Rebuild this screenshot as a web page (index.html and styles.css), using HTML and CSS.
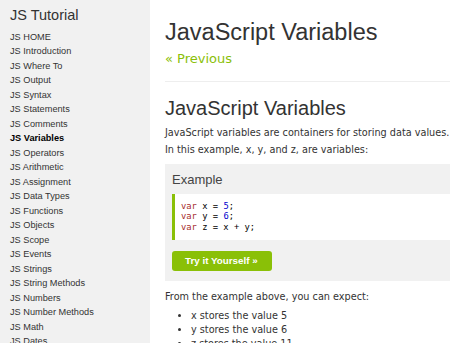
FILE: index.html
```html
<!DOCTYPE html>
<html>
<head>
<meta charset="utf-8">
<link rel="stylesheet" href="styles.css">
</head>
<body>
<aside class="sidebar">
  <h2 class="side-title">JS Tutorial</h2>
  <nav class="side-links">
    <a>JS HOME</a>
    <a>JS Introduction</a>
    <a>JS Where To</a>
    <a>JS Output</a>
    <a>JS Syntax</a>
    <a>JS Statements</a>
    <a>JS Comments</a>
    <a class="active">JS Variables</a>
    <a>JS Operators</a>
    <a>JS Arithmetic</a>
    <a>JS Assignment</a>
    <a>JS Data Types</a>
    <a>JS Functions</a>
    <a>JS Objects</a>
    <a>JS Scope</a>
    <a>JS Events</a>
    <a>JS Strings</a>
    <a>JS String Methods</a>
    <a>JS Numbers</a>
    <a>JS Number Methods</a>
    <a>JS Math</a>
    <a>JS Dates</a>
  </nav>
</aside>
<main class="content">
  <h1 class="page-title">JavaScript Variables</h1>
  <a class="prev">&laquo; Previous</a>
  <hr class="rule">
  <h2 class="section-title">JavaScript Variables</h2>
  <p class="text first">JavaScript variables are containers for storing data values.</p>
  <p class="text second">In this example, x, y, and z, are variables:</p>
  <div class="example">
    <h3 class="example-title">Example</h3>
    <div class="code"><span class="kw">var</span> x = <span class="num">5</span>;<br><span class="kw">var</span> y = <span class="num">6</span>;<br><span class="kw">var</span> z = x + y;</div>
    <a class="try">Try it Yourself &raquo;</a>
  </div>
  <p class="text after">From the example above, you can expect:</p>
  <ul class="list">
    <li>x stores the value 5</li>
    <li>y stores the value 6</li>
    <li>z stores the value 11</li>
  </ul>
</main>
</body>
</html>
```
FILE: styles.css
```css
html, body {
  margin: 0;
  padding: 0;
  overflow: hidden;
  background: #fff;
}
body {
  display: flex;
  align-items: flex-start;
  width: 450px;
  height: 343px;
}
.sidebar {
  flex: none;
  width: 150px;
  height: 343px;
  background: #f1f1f1;
  box-sizing: border-box;
  padding: 7px 0 0 10px;
  font-family: "Liberation Sans", Arial, sans-serif;
}
.side-title {
  margin: 0 0 6px 0;
  font-size: 14.5px;
  font-weight: normal;
  line-height: 17px;
  color: #333;
}
.side-links {
  display: flex;
  flex-direction: column;
}
.side-links a {
  font-size: 9.2px;
  line-height: 14.48px;
  color: #333;
}
.side-links a.active {
  font-weight: bold;
  color: #000;
}
.content {
  flex: none;
  width: 340px;
  padding-left: 15px;
  font-family: "DejaVu Sans", Verdana, sans-serif;
  color: #333;
}
.page-title {
  margin: 19px 0 0 0;
  font-family: "Liberation Sans", Arial, sans-serif;
  font-size: 23.5px;
  font-weight: normal;
  line-height: 26px;
  color: #333;
}
.prev {
  display: block;
  margin-top: 6px;
  font-size: 13px;
  line-height: 16px;
  color: #8ac007;
}
.rule {
  margin: 14px 0 0 0;
  border: 0;
  border-top: 1px solid #eee;
}
.section-title {
  margin: 15px 0 0 0;
  font-family: "Liberation Sans", Arial, sans-serif;
  font-size: 20px;
  font-weight: normal;
  line-height: 22px;
  color: #333;
}
.text {
  margin: 0;
  font-size: 9.7px;
  line-height: 13px;
}
.text.first { margin-top: 6.7px; }
.text.second { margin-top: 4.3px; }
.text.after { margin-top: 8.7px; }
.example {
  margin-top: 8px;
  background: #f1f1f1;
  padding: 8px 8px 10px 7px;
}
.example-title {
  margin: 0 0 6px 0;
  font-family: "Liberation Sans", Arial, sans-serif;
  font-size: 13px;
  font-weight: normal;
  line-height: 16px;
  color: #444;
}
.code {
  background: #fff;
  border-left: 3px solid #8ac007;
  padding: 7px 8px 8px 6px;
  font-family: "DejaVu Sans Mono", Consolas, monospace;
  font-size: 8.8px;
  line-height: 10.5px;
  color: #000;
}
.kw { color: #a52a2a; }
.num { color: #0000cd; }
.try {
  display: inline-block;
  margin-top: 10.5px;
  background: #8ac007;
  color: #fff;
  border-radius: 3px;
  padding: 0 14px 0 13px;
  font-family: "Liberation Sans", Arial, sans-serif;
  font-weight: bold;
  font-size: 9.8px;
  line-height: 20px;
  vertical-align: top;
}
.list {
  margin: 6px 0 0 0;
  padding-left: 26px;
  font-size: 9.7px;
  line-height: 14.3px;
}
```
